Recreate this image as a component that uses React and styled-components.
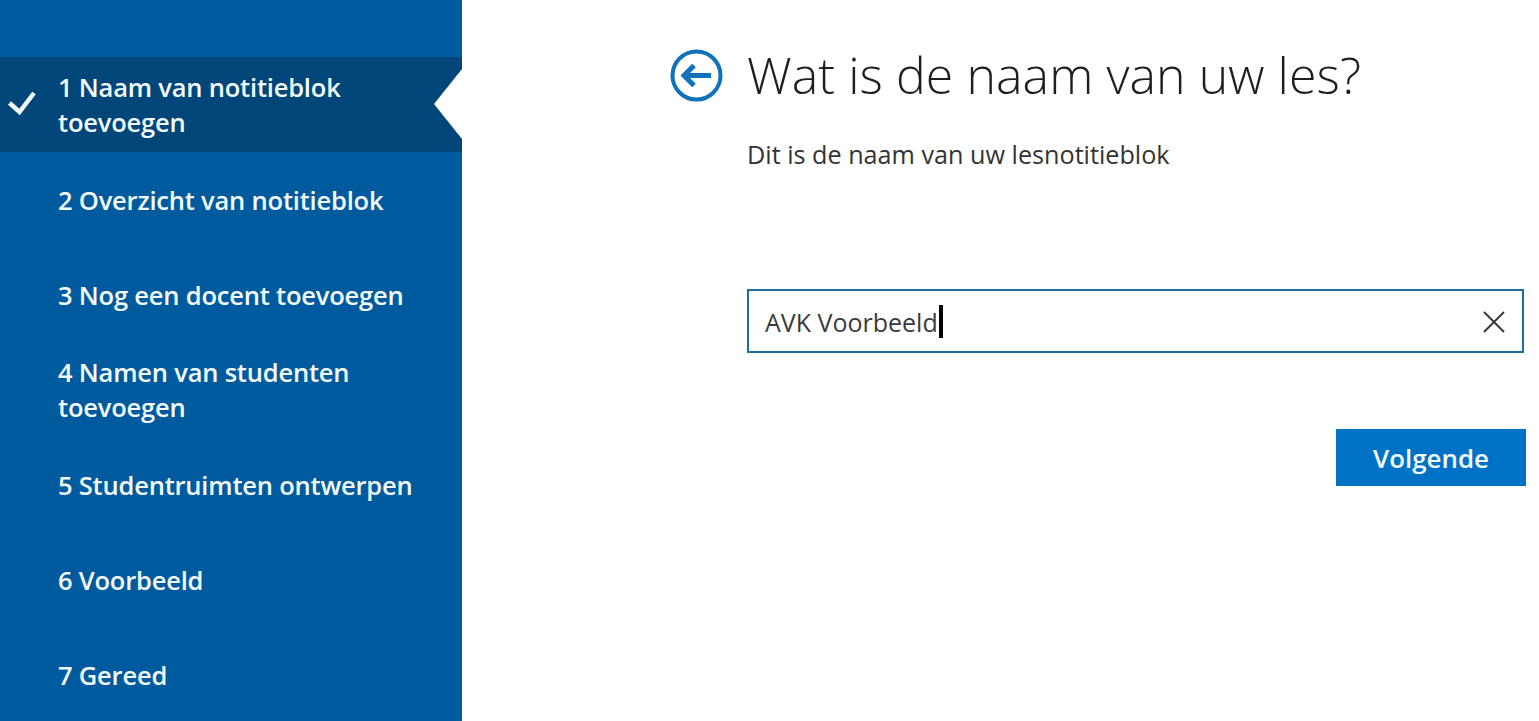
import React from "react";
import styled, { createGlobalStyle } from "styled-components";

const Global = createGlobalStyle`
  html, body { margin: 0; padding: 0; background: #fff; overflow: hidden; }
  body { font-family: "Open Sans", "Noto Sans", sans-serif; }
`;

const Page = styled.div`
  display: flex;
  width: 1539px;
  height: 721px;
  overflow: hidden;
`;

const Sidebar = styled.nav`
  flex: 0 0 462px;
  height: 721px;
  padding-top: 57px;
  box-sizing: border-box;
  background: #005a9e;
`;

const StepRow = styled.div`
  position: relative;
  display: flex;
  align-items: center;
  height: 95px;
  padding: 1px 0 0 58px;
  box-sizing: border-box;
  color: #f4fbff;
  background: ${(p) => (p.$active ? "#004679" : "transparent")};
`;

const StepLabel = styled.span`
  font-size: 25.5px;
  font-weight: 600;
  line-height: 35px;
  max-width: 370px;
  letter-spacing: -0.2px;
`;

const Check = styled.svg`
  position: absolute;
  left: 8px;
  top: 33px;
  width: 28px;
  height: 26px;
`;

const Notch = styled.div`
  position: absolute;
  right: 0;
  top: 12px;
  width: 28px;
  height: 70px;
  background: #fff;
  clip-path: polygon(100% 0, 0 50%, 100% 100%);
`;

const Main = styled.main`
  flex: 1;
  padding: 48px 13px 0 208px;
  display: flex;
  flex-direction: column;
`;

const Header = styled.header`
  display: flex;
  align-items: center;
  gap: 24px;
  height: 54px;
`;

const BackIcon = styled.svg`
  flex: 0 0 53px;
  width: 53px;
  height: 53px;
`;

const Title = styled.h1`
  margin: 0;
  font-size: 50px;
  font-weight: 300;
  line-height: 54px;
  letter-spacing: 0.08px;
  color: #1e1e1e;
  white-space: nowrap;
`;

const Subtitle = styled.p`
  margin: 34px 0 0 77px;
  font-size: 25.2px;
  font-weight: 400;
  line-height: 36px;
  color: #333;
`;

const Field = styled.div`
  display: flex;
  align-items: center;
  margin: 117px 2px 0 77px;
  height: 64px;
  padding: 1px 17px 0 16px;
  box-sizing: border-box;
  border: 2px solid #1c6e9c;
`;

const FieldText = styled.span`
  font-size: 25px;
  line-height: 36px;
  color: #3a3a3a;
`;

const Caret = styled.span`
  display: inline-block;
  width: 4px;
  height: 33px;
  margin-left: 1px;
  background: #000;
`;

const Clear = styled.svg`
  width: 24px;
  height: 24px;
  margin-left: auto;
  margin-right: -1px;
`;

const Actions = styled.div`
  display: flex;
  justify-content: flex-end;
  margin-top: 76px;
`;

const NextButton = styled.button`
  width: 190px;
  height: 57px;
  border: 0;
  padding: 0;
  background: #0072c6;
  color: #f4fbff;
  font-family: inherit;
  font-size: 25.9px;
  font-weight: 600;
`;

const steps = [
  "1 Naam van notitieblok toevoegen",
  "2 Overzicht van notitieblok",
  "3 Nog een docent toevoegen",
  "4 Namen van studenten toevoegen",
  "5 Studentruimten ontwerpen",
  "6 Voorbeeld",
  "7 Gereed",
];

export default function App() {
  return (
    <Page>
      <Global />
      <Sidebar>
        {steps.map((s, i) => (
          <StepRow key={s} $active={i === 0}>
            {i === 0 && (
              <Check viewBox="0 0 28 26">
                <path d="M1.5 13l10 9L26 3" fill="none" stroke="#f4fbff" strokeWidth="4.5" />
              </Check>
            )}
            <StepLabel>{s}</StepLabel>
            {i === 0 && <Notch />}
          </StepRow>
        ))}
      </Sidebar>
      <Main>
        <Header>
          <BackIcon viewBox="0 0 53 53">
            <circle cx="26.5" cy="26.5" r="24" fill="none" stroke="#0f72ba" strokeWidth="4" />
            <path d="M41 26.5H15M24 16.5L14 26.5l10 10" fill="none" stroke="#0f72ba" strokeWidth="5" />
          </BackIcon>
          <Title>Wat is de naam van uw les?</Title>
        </Header>
        <Subtitle>Dit is de naam van uw lesnotitieblok</Subtitle>
        <Field>
          <FieldText>AVK Voorbeeld</FieldText>
          <Caret />
          <Clear viewBox="0 0 24 24">
            <path d="M2 2l20 20M22 2L2 22" fill="none" stroke="#333" strokeWidth="1.8" />
          </Clear>
        </Field>
        <Actions>
          <NextButton>Volgende</NextButton>
        </Actions>
      </Main>
    </Page>
  );
}
